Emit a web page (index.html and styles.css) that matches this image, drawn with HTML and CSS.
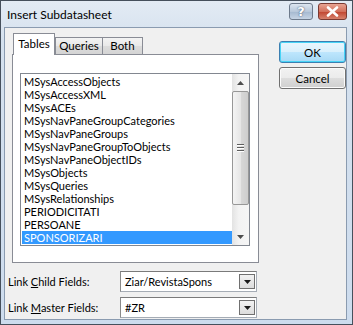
FILE: index.html
```html
<!DOCTYPE html>
<html>
<head>
<meta charset="utf-8">
<link rel="stylesheet" href="styles.css">
</head>
<body>
<div class="win">
  <div class="titlebar">
    <span class="title">Insert Subdatasheet</span>
    <div class="tbtns">
      <div class="tbtn help">?</div>
      <div class="tbtn close">
        <svg width="13" height="11" viewBox="0 0 13 11"><path d="M2 1.5 L11 9.5 M11 1.5 L2 9.5" stroke="#fff" stroke-width="2.6" stroke-linecap="round"/></svg>
      </div>
    </div>
  </div>
  <div class="client">
    <div class="main">
      <div class="tabs">
        <div class="tab active">Tables</div>
        <div class="tab">Queries</div>
        <div class="tab">Both</div>
      </div>
      <div class="panel">
        <div class="listbox">
          <div class="items">
            <div class="item">MSysAccessObjects</div>
            <div class="item">MSysAccessXML</div>
            <div class="item">MSysACEs</div>
            <div class="item">MSysNavPaneGroupCategories</div>
            <div class="item">MSysNavPaneGroups</div>
            <div class="item">MSysNavPaneGroupToObjects</div>
            <div class="item">MSysNavPaneObjectIDs</div>
            <div class="item">MSysObjects</div>
            <div class="item">MSysQueries</div>
            <div class="item">MSysRelationships</div>
            <div class="item">PERIODICITATI</div>
            <div class="item">PERSOANE</div>
            <div class="item selected">SPONSORIZARI</div>
          </div>
          <div class="scrollbar">
            <div class="arrow"><svg width="7" height="4" viewBox="0 0 7 4"><path d="M0 4 L3.5 0 L7 4 Z" fill="#4d4d4d"/></svg></div>
            <div class="track">
              <div class="thumb"><div class="grip"></div><div class="grip"></div><div class="grip"></div></div>
            </div>
            <div class="arrow"><svg width="7" height="4" viewBox="0 0 7 4"><path d="M0 0 L7 0 L3.5 4 Z" fill="#4d4d4d"/></svg></div>
          </div>
        </div>
      </div>
      <div class="field">
        <span class="label">Link <u>C</u>hild Fields:</span>
        <div class="combo"><span class="value">Ziar/RevistaSpons</span><div class="dd"><svg width="7" height="4" viewBox="0 0 7 4"><path d="M0 0 L7 0 L3.5 4 Z" fill="#1a1a1a"/></svg></div></div>
      </div>
      <div class="field">
        <span class="label">Link <u>M</u>aster Fields:</span>
        <div class="combo"><span class="value">#ZR</span><div class="dd"><svg width="7" height="4" viewBox="0 0 7 4"><path d="M0 0 L7 0 L3.5 4 Z" fill="#1a1a1a"/></svg></div></div>
      </div>
    </div>
    <div class="side">
      <div class="btn default">OK</div>
      <div class="btn">Cancel</div>
    </div>
  </div>
</div>
</body>
</html>
```

FILE: styles.css
```css
html, body { margin: 0; padding: 0; background: #fff; }
body { font-family: Lato, "Open Sans", sans-serif; font-size: 11px; color: #000; }

.win {
  width: 353px; height: 325px; box-sizing: border-box;
  border: 1px solid #46505c;
  background: linear-gradient(#e3ebf4, #d5e1ee 40px, #cddcee);
  padding: 0 5px 4px 3px;
  display: flex; flex-direction: column;
}
.titlebar {
  height: 26px; display: flex; align-items: center; justify-content: space-between;
}
.title { font-size: 12px; margin-left: 3px; color: #000; }
.tbtns { display: flex; gap: 5px; margin-top: -6px; }
.tbtn {
  height: 16px; border: 1px solid #6d7a8b; border-radius: 3px;
  display: flex; align-items: center; justify-content: center; box-sizing: border-box;
}
.help {
  width: 24px; height: 17px; font-size: 13px; font-weight: bold; color: #fff;
  background: linear-gradient(#dde6f0, #b8c8da 50%, #a4b8cf 51%, #c6d4e4);
  text-shadow: 0 0 2px #5a6a80, 0 0 1px #5a6a80;
  font-family: "DejaVu Sans", sans-serif;
}
.close {
  width: 29px; height: 17px;
  background: linear-gradient(#e8a493, #d2705c 50%, #c0432e 51%, #d6826d);
  border-color: #7a3a32;
}

.client {
  flex: 1; background: #f0f0f0; border: 1px solid #8a9bb0;
  display: flex; padding: 5px 0 0 0;
}
.main { width: 252px; margin-left: 7px; }
.tabs { display: flex; align-items: flex-end; padding-left: 1px; height: 21px; position: relative; z-index: 1; }
.tab {
  height: 17px; box-sizing: border-box; line-height: 15px; text-align: center;
  border: 1px solid #898c95; border-bottom: none; margin-left: -1px;
  background: linear-gradient(#f3f3f3, #e8e8e8 50%, #dcdcdc 51%, #d4d4d4);
  font-size: 11.5px; color: #000; white-space: nowrap;
}
.tab:nth-child(2) { margin-left: 0; width: 48px; }
.tab:nth-child(3) { width: 41px; }
.tab.active {
  width: 42px; background: #fff; margin-left: 0; margin-bottom: -1px;
  line-height: 17px; padding-top: 1px; height: 22px;
}
.panel {
  width: 247px; height: 209px; box-sizing: border-box;
  border: 1px solid #898c95; background: #fff;
  padding: 18px 0 0 7px;
}
.listbox {
  width: 230px; height: 173px; box-sizing: border-box;
  border: 1px solid #828790; display: flex; background: #fff;
}
.items { flex: 1; padding: 1px 0 0 1px; }
.item { height: 13px; line-height: 13px; padding-left: 2px; font-size: 11px; white-space: nowrap; }
.item.selected { background: #3399ff; color: #fff; }
.scrollbar {
  width: 17px; display: flex; flex-direction: column;
  background: linear-gradient(90deg, #e3e3e3, #f3f3f3 40%, #f5f5f5);
}
.arrow { height: 17px; display: flex; align-items: center; justify-content: center; }
.track { flex: 1; display: flex; flex-direction: column; }
.thumb {
  height: 114px; box-sizing: border-box;
  border: 1px solid #979797; border-radius: 2px;
  background: linear-gradient(90deg, #f4f4f4, #e6e6e6 50%, #d8d8d8 51%, #cdcdcd);
  display: flex; flex-direction: column; align-items: center; justify-content: center; gap: 1px;
}
.grip { width: 7px; height: 1px; background: #5e5e5e; box-shadow: 0 1px 0 #fff; margin-bottom: 1px; }

.field { display: flex; align-items: center; margin-top: 8px; margin-left: -4px; height: 21px; }
.field + .field { margin-top: 5px; }
.label { width: 112px; font-size: 11px; }
.combo {
  width: 137px; height: 21px; box-sizing: border-box;
  border: 1px solid #a5acb5; border-top-color: #7a7a7a; border-left-color: #8a8a8a;
  background: #fff; display: flex; align-items: center; justify-content: space-between;
}
.value { font-size: 11px; padding-left: 4px; }
.dd {
  width: 16px; height: 15px; margin-right: 1px; box-sizing: border-box;
  border: 1px solid #707070; background: linear-gradient(#f2f2f2, #dcdcdc);
  display: flex; align-items: center; justify-content: center;
}

.side { margin-left: 15px; padding-top: 8px; display: flex; flex-direction: column; gap: 4px; }
.btn {
  width: 67px; height: 22px; box-sizing: border-box; border: 1px solid #707070; border-radius: 3px;
  background: linear-gradient(#f2f2f2, #ebebeb 50%, #dddddd 51%, #cfcfcf);
  display: flex; align-items: center; justify-content: center; font-size: 11.5px;
  box-shadow: inset 0 0 0 1px #fbfbfb;
}
.btn.default { border-color: #3c7fb1; box-shadow: inset 0 0 0 1px #48d4f6; background: linear-gradient(#eaf6fd, #d9f0fc 50%, #bee6fd 51%, #a7d9f5); }
```
